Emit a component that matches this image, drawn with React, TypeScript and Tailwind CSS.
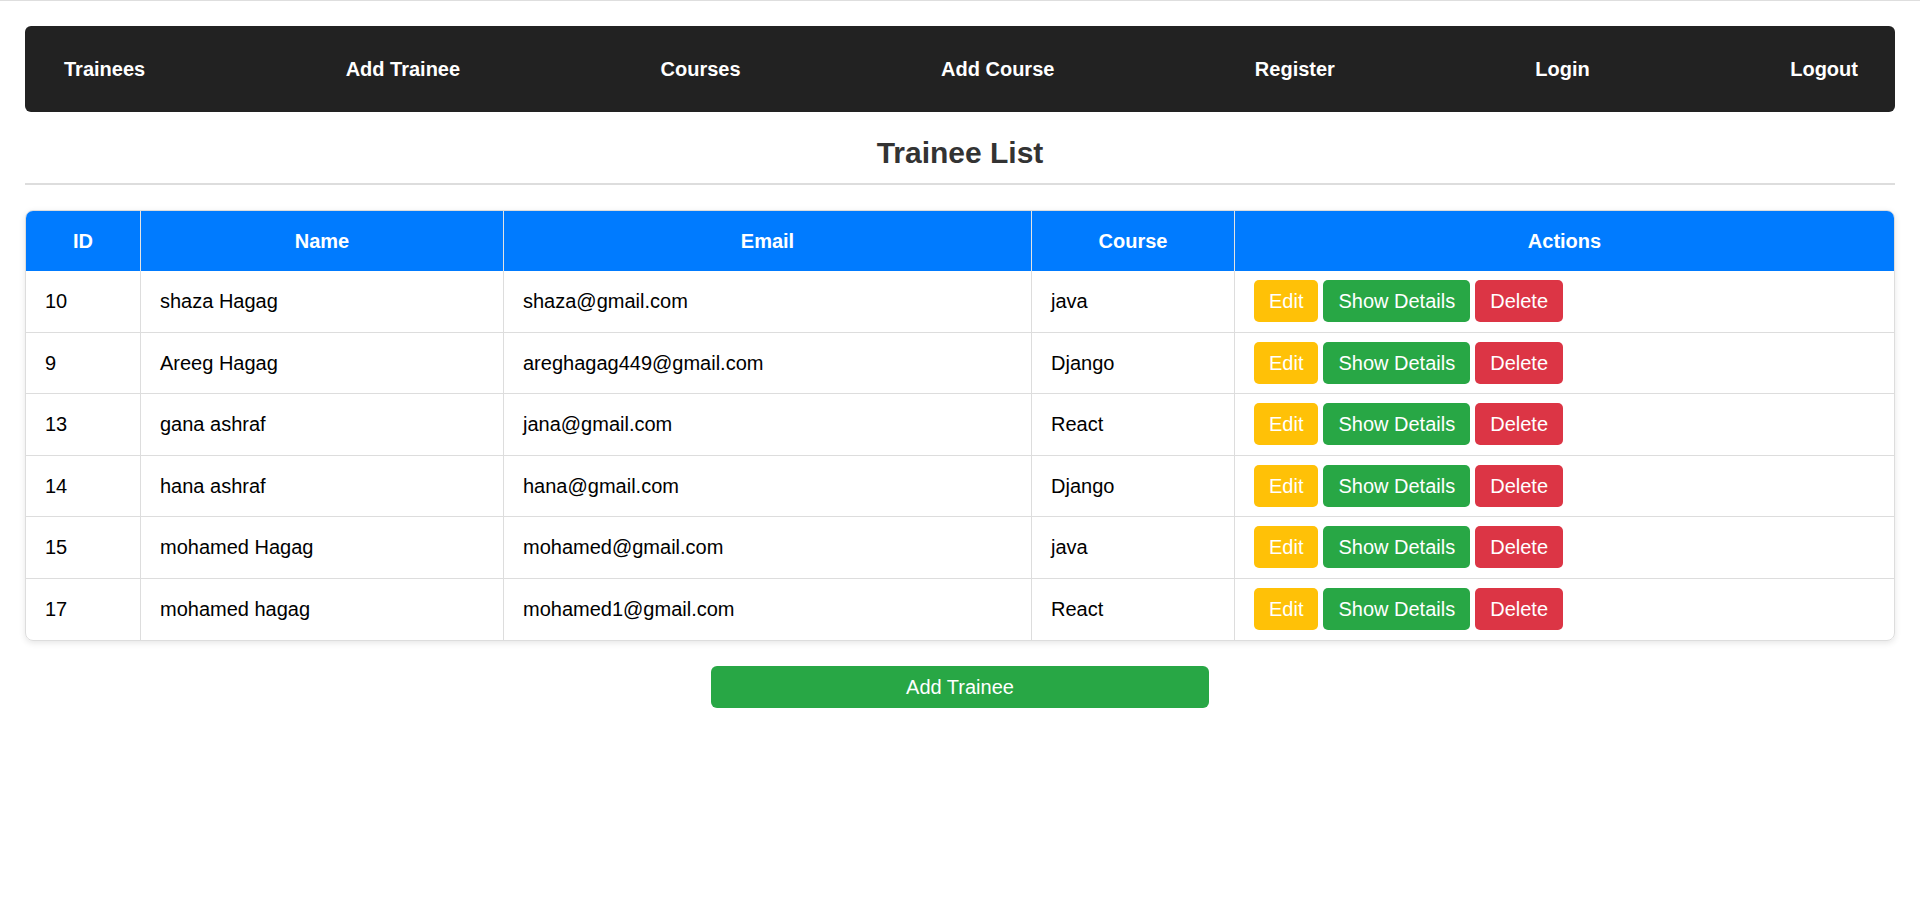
import React from 'react'

interface Trainee {
  id: number
  name: string
  email: string
  course: string
}

const trainees: Trainee[] = [
  { id: 10, name: 'shaza Hagag', email: 'shaza@gmail.com', course: 'java' },
  { id: 9, name: 'Areeg Hagag', email: 'areghagag449@gmail.com', course: 'Django' },
  { id: 13, name: 'gana ashraf', email: 'jana@gmail.com', course: 'React' },
  { id: 14, name: 'hana ashraf', email: 'hana@gmail.com', course: 'Django' },
  { id: 15, name: 'mohamed Hagag', email: 'mohamed@gmail.com', course: 'java' },
  { id: 17, name: 'mohamed hagag', email: 'mohamed1@gmail.com', course: 'React' },
]

const navLinks = ['Trainees', 'Add Trainee', 'Courses', 'Add Course', 'Register', 'Login', 'Logout']

const headCell = 'flex items-center justify-center font-bold text-white border-r border-[#e3e3e3]'
const bodyCell = 'flex items-center pl-[19px] border-r border-b border-[#dddddd]'

const App = () => {
  return (
    <div className="min-h-[915px] bg-white border-t border-[#dedede] font-['Liberation_Sans',Arial,sans-serif] text-[20px]">
      <div className="px-[25px] pt-[25px]">
        {/* Navbar */}
        <nav className="h-[86px] bg-[#222222] rounded-[6px] flex items-center justify-between pl-[39px] pr-[37px]">
          {navLinks.map((link) => (
            <a key={link} className="text-white font-bold text-[20px] leading-none">
              {link}
            </a>
          ))}
        </nav>

        {/* Title */}
        <h2 className="mt-[23px] pb-[13px] border-b-2 border-[#dddddd] text-center text-[30px] leading-[35px] font-bold text-[#333333]">
          Trainee List
        </h2>

        {/* Table */}
        <div className="mt-[25px] border border-[#dddddd] rounded-[8px] overflow-hidden shadow-[0_2px_6px_rgba(0,0,0,0.1)]">
          <div className="grid grid-cols-[115px_363px_528px_203px_1fr] h-[60px] bg-[#007bff]">
            <div className={headCell}>ID</div>
            <div className={headCell}>Name</div>
            <div className={headCell}>Email</div>
            <div className={headCell}>Course</div>
            <div className="flex items-center justify-center font-bold text-white">Actions</div>
          </div>
          {trainees.map((t, idx) => {
            const last = idx === trainees.length - 1 ? 'border-b-0' : ''
            return (
              <div key={t.id} className="grid grid-cols-[115px_363px_528px_203px_1fr] h-[61.5px] text-black">
                <div className={`${bodyCell} ${last}`}>{t.id}</div>
                <div className={`${bodyCell} ${last}`}>{t.name}</div>
                <div className={`${bodyCell} ${last}`}>{t.email}</div>
                <div className={`${bodyCell} ${last}`}>{t.course}</div>
                <div className={`flex items-center gap-[5px] pl-[19px] border-b border-[#dddddd] ${last}`}>
                  <button className="h-[42px] px-[15px] rounded-[5px] bg-[#ffc107] text-white">Edit</button>
                  <button className="h-[42px] px-[15px] rounded-[5px] bg-[#28a745] text-white">Show Details</button>
                  <button className="h-[42px] px-[15px] rounded-[5px] bg-[#dc3545] text-white">Delete</button>
                </div>
              </div>
            )
          })}
        </div>

        {/* Add button */}
        <div className="flex justify-center mt-[25px]">
          <button className="w-[498px] h-[42px] rounded-[6px] bg-[#28a745] text-white text-[20px]">
            Add Trainee
          </button>
        </div>
      </div>
    </div>
  )
}

export default App
